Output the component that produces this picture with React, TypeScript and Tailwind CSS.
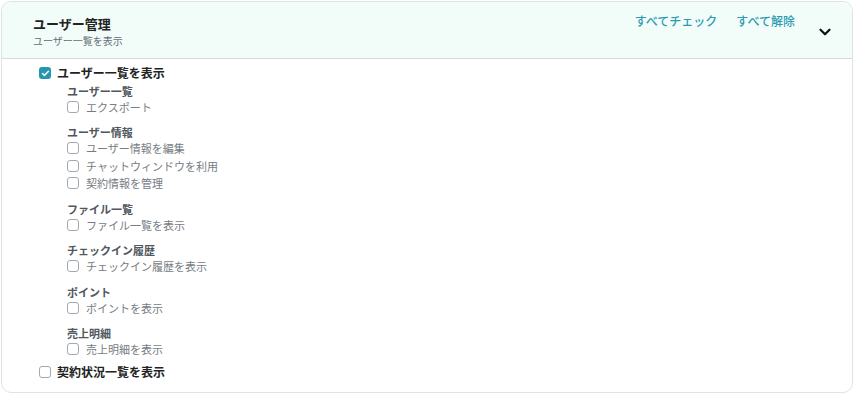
import { ChevronDown, Check } from "lucide-react";

const groups = [
  { title: "ユーザー一覧", items: ["エクスポート"] },
  { title: "ユーザー情報", items: ["ユーザー情報を編集", "チャットウィンドウを利用", "契約情報を管理"] },
  { title: "ファイル一覧", items: ["ファイル一覧を表示"] },
  { title: "チェックイン履歴", items: ["チェックイン履歴を表示"] },
  { title: "ポイント", items: ["ポイントを表示"] },
  { title: "売上明細", items: ["売上明細を表示"] },
];

const Box = ({ checked = false }: { checked?: boolean }) =>
  checked ? (
    <span className="w-[12px] h-[12px] rounded-[3px] bg-[#2596b0] flex items-center justify-center shrink-0">
      <Check size={9} strokeWidth={4} className="text-white" />
    </span>
  ) : (
    <span className="w-[12px] h-[12px] rounded-[3px] border border-[#a3a9b1] bg-white shrink-0" />
  );

export default function App() {
  return (
    <div
      className="w-[854px] h-[394px] bg-white p-[1px]"
      style={{ fontFamily: '"Noto Sans CJK JP", "Noto Sans", sans-serif' }}
    >
      <div className="h-[392px] border border-[#dfe3e6] rounded-[10px] overflow-hidden">
        {/* Header */}
        <div className="h-[57px] bg-[#f2fdf9] border-b border-[#d5dadd] flex items-start pl-[31px] pr-[18px]">
          <div className="pt-[12px] flex-1">
            <h2 className="text-[13px] leading-[20px] font-bold text-[#222]">ユーザー管理</h2>
            <p className="text-[10px] leading-[14px] text-[#666d75]">ユーザー一覧を表示</p>
          </div>
          <div className="flex items-center gap-[19px] pt-[10px] text-[12px] leading-[18px] font-medium text-[#2a9bb3]">
            <button>すべてチェック</button>
            <button>すべて解除</button>
          </div>
          <ChevronDown size={18} strokeWidth={3} className="text-[#111] ml-[21px] mt-[21px]" />
        </div>

        {/* Body */}
        <div className="pt-[6px] pl-[37px]">
          <label className="h-[16px] flex items-center gap-[6px]">
            <Box checked />
            <span className="text-[12px] font-bold text-[#222]">ユーザー一覧を表示</span>
          </label>
          <div className="pl-[28px] pt-[3px] flex flex-col gap-[10px]">
            {groups.map((g) => (
              <div key={g.title}>
                <div className="h-[14px] flex items-center text-[11px] font-bold text-[#50575e]">{g.title}</div>
                {g.items.map((item) => (
                  <label key={item} className="h-[17.5px] flex items-center gap-[7px]">
                    <Box />
                    <span className="text-[11px] text-[#767d84]">{item}</span>
                  </label>
                ))}
              </div>
            ))}
          </div>
          <label className="h-[16px] mt-[6px] flex items-center gap-[6px]">
            <Box />
            <span className="text-[12px] font-bold text-[#222]">契約状況一覧を表示</span>
          </label>
        </div>
      </div>
    </div>
  );
}
